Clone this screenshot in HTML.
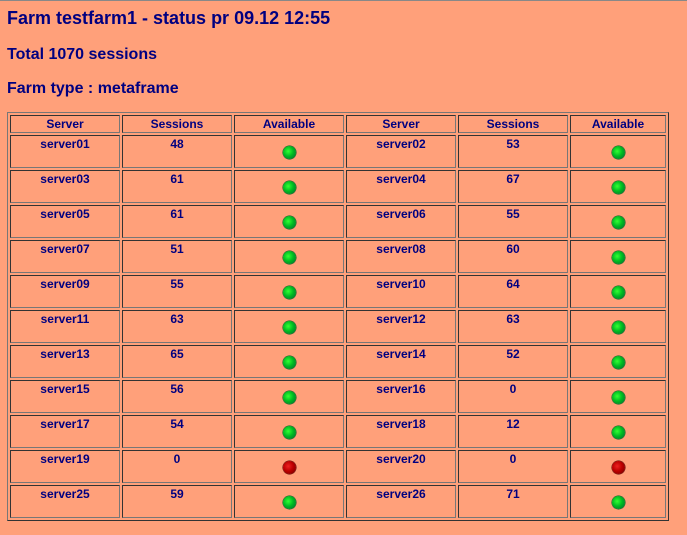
<!DOCTYPE html>
<html><head><style>
html,body{margin:0;padding:0;background:#FFA07A;width:687px;height:535px;overflow:hidden}
body{border-top:1px solid #888;box-sizing:border-box;font-family:"Liberation Sans",sans-serif;color:#000080}
.t1{position:absolute;left:7px;top:8px;font-size:18px;font-weight:bold;margin:0}
.t2{position:absolute;left:7px;top:46px;font-size:16px;font-weight:bold;margin:0}
.t3{position:absolute;left:7px;top:80px;font-size:16px;font-weight:bold;margin:0}
table{position:absolute;left:7px;top:112px;border-collapse:separate;border-spacing:2px;border:1px solid;border-color:#777 #333 #333 #777}
td,th{box-sizing:border-box;border:1px solid;border-color:#333 #777 #777 #333;padding:0;font-size:12px;font-weight:bold;text-align:center;vertical-align:top;color:#000080}
th{height:18px;line-height:16px}
td{height:33px;line-height:16px;padding-top:0}
td.d{vertical-align:middle;padding-top:0}
.g,.r{display:inline-block;width:13px;height:13px;border-radius:50%;vertical-align:middle}
.g{background:radial-gradient(circle at 40% 40%,#3f3 0,#0b2 45%,#063 100%);box-shadow:0 0 0 0.5px #052}
.r{background:radial-gradient(circle at 40% 40%,#e22 0,#b00 45%,#600 100%);box-shadow:0 0 0 0.5px #500}
</style></head><body>
<div class="t1">Farm testfarm1 - status pr 09.12 12:55</div>
<div class="t2">Total 1070 sessions</div>
<div class="t3">Farm type : metaframe</div>
<table>
<tr><th style="width:110px">Server</th><th style="width:110px">Sessions</th><th style="width:110px">Available</th><th style="width:110px">Server</th><th style="width:110px">Sessions</th><th style="width:96px">Available</th></tr>
<tr><td>server01</td><td>48</td><td class="d"><span class="g"></span></td><td>server02</td><td>53</td><td class="d"><span class="g"></span></td></tr>
<tr><td>server03</td><td>61</td><td class="d"><span class="g"></span></td><td>server04</td><td>67</td><td class="d"><span class="g"></span></td></tr>
<tr><td>server05</td><td>61</td><td class="d"><span class="g"></span></td><td>server06</td><td>55</td><td class="d"><span class="g"></span></td></tr>
<tr><td>server07</td><td>51</td><td class="d"><span class="g"></span></td><td>server08</td><td>60</td><td class="d"><span class="g"></span></td></tr>
<tr><td>server09</td><td>55</td><td class="d"><span class="g"></span></td><td>server10</td><td>64</td><td class="d"><span class="g"></span></td></tr>
<tr><td>server11</td><td>63</td><td class="d"><span class="g"></span></td><td>server12</td><td>63</td><td class="d"><span class="g"></span></td></tr>
<tr><td>server13</td><td>65</td><td class="d"><span class="g"></span></td><td>server14</td><td>52</td><td class="d"><span class="g"></span></td></tr>
<tr><td>server15</td><td>56</td><td class="d"><span class="g"></span></td><td>server16</td><td>0</td><td class="d"><span class="g"></span></td></tr>
<tr><td>server17</td><td>54</td><td class="d"><span class="g"></span></td><td>server18</td><td>12</td><td class="d"><span class="g"></span></td></tr>
<tr><td>server19</td><td>0</td><td class="d"><span class="r"></span></td><td>server20</td><td>0</td><td class="d"><span class="r"></span></td></tr>
<tr><td>server25</td><td>59</td><td class="d"><span class="g"></span></td><td>server26</td><td>71</td><td class="d"><span class="g"></span></td></tr>
</table>
</body></html>
